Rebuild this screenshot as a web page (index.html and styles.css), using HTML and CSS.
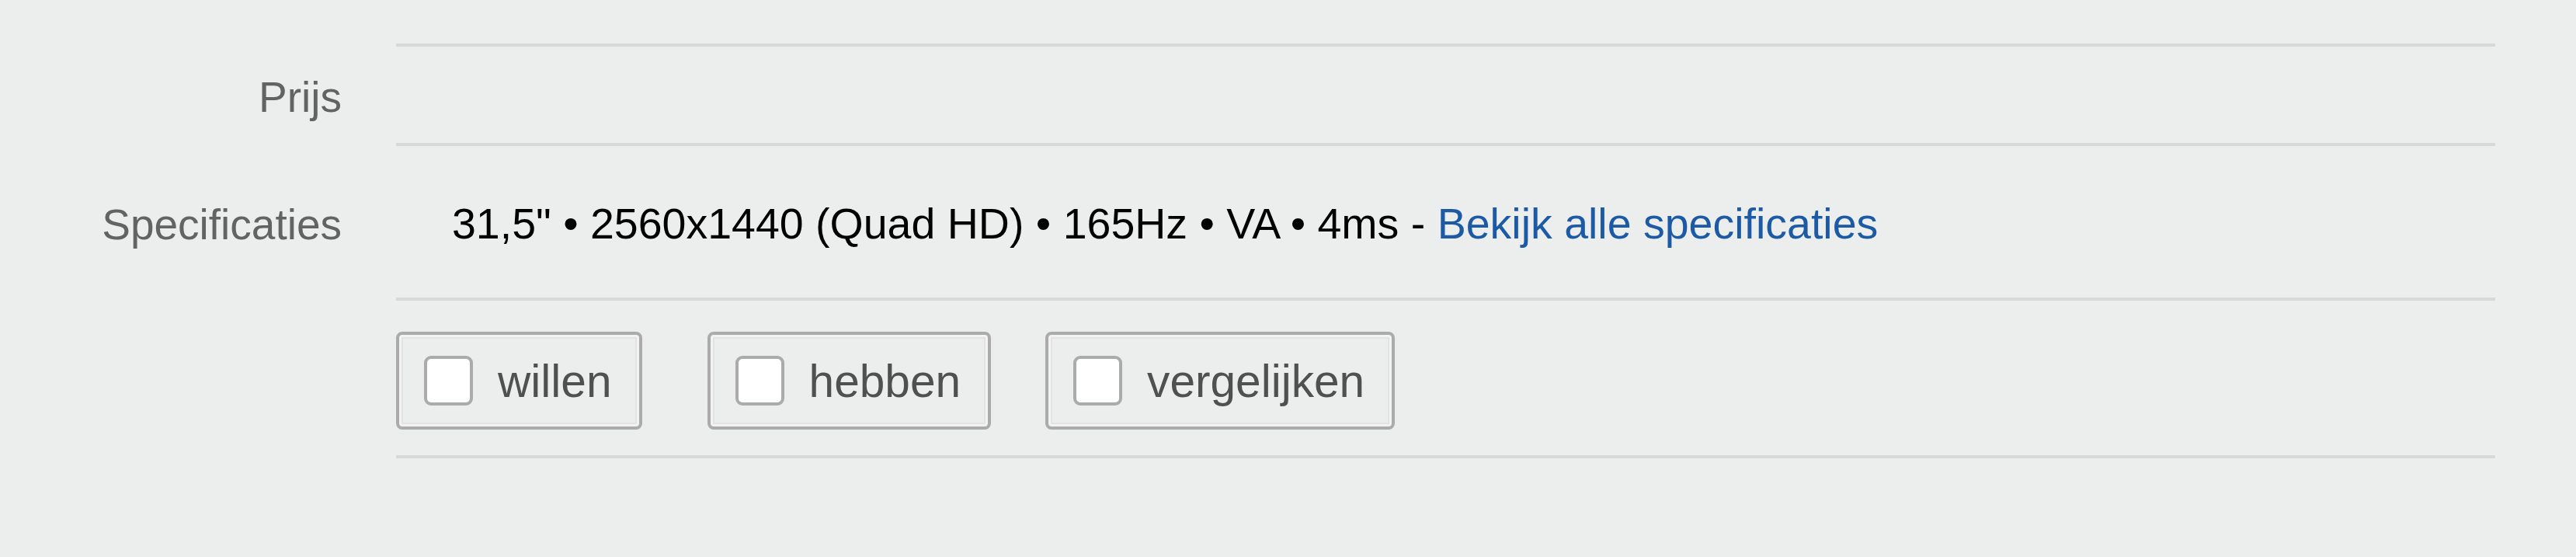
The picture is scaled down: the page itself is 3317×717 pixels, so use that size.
FILE: index.html
```html
<!DOCTYPE html>
<html lang="nl">
<head>
<meta charset="utf-8">
<title>Specificaties</title>
<link rel="stylesheet" href="styles.css">
</head>
<body>
<div class="specs">
  <div class="row row-price">
    <div class="label">Prijs</div>
    <div class="value"></div>
  </div>
  <div class="row row-specs">
    <div class="label">Specificaties</div>
    <div class="value value-text">31,5" • 2560x1440 (Quad HD) • 165Hz • VA • 4ms - <a class="link" href="#">Bekijk alle specificaties</a></div>
  </div>
  <div class="row row-actions">
    <div class="label"></div>
    <div class="value value-actions">
      <label class="toggle toggle-first"><span class="box"></span><span class="toggle-text">willen</span></label>
      <label class="toggle"><span class="box"></span><span class="toggle-text">hebben</span></label>
      <label class="toggle"><span class="box"></span><span class="toggle-text">vergelijken</span></label>
    </div>
  </div>
</div>
</body>
</html>
```

FILE: styles.css
```css
html, body {
  margin: 0;
  padding: 0;
  background: #eceeed;
}

body {
  font-family: "Liberation Sans", Arial, sans-serif;
  width: 3317px;
  height: 717px;
  overflow: hidden;
}

.specs {
  padding: 56px 104px 0 0;
  display: flex;
  flex-direction: column;
}

.row {
  display: flex;
  align-items: stretch;
}

.label {
  width: 440px;
  flex: none;
  margin-right: 70px;
  display: flex;
  align-items: center;
  justify-content: flex-end;
  font-size: 55px;
  color: #636363;
  padding-top: 10px;
}

.value {
  flex: 1;
  border-top: 4px solid #d8d8d8;
}

.row-price .value {
  height: 124px;
}

.row-specs .value {
  height: 195px;
}

.value-text {
  display: flex;
  align-items: center;
  padding: 4px 0 0 72px;
  box-sizing: content-box;
  font-size: 55.5px;
  color: #000000;
  white-space: pre;
}

.row-specs .value-text {
  height: 191px;
}

.link {
  color: #1d5aa6;
  text-decoration: none;
}

.value-actions {
  height: 159px;
  padding-top: 40px;
  border-bottom: 4px solid #d8d8d8;
  display: flex;
  align-items: flex-start;
  gap: 70px;
}

.toggle {
  box-sizing: border-box;
  height: 126px;
  display: inline-flex;
  align-items: center;
  gap: 32px;
  padding: 0 35px 0 32px;
  border: 4px solid #ababab;
  border-radius: 8px;
  box-shadow: inset 0 0 0 3px #f1f2f1, inset 0 0 0 5px #e2e3e2;
  font-size: 58.6px;
  color: #505050;
}

.toggle-first {
  margin-right: 14px;
}

.box {
  box-sizing: border-box;
  width: 63px;
  height: 64px;
  background: #ffffff;
  border: 4px solid #ababab;
  border-radius: 9px;
  flex: none;
}
```
